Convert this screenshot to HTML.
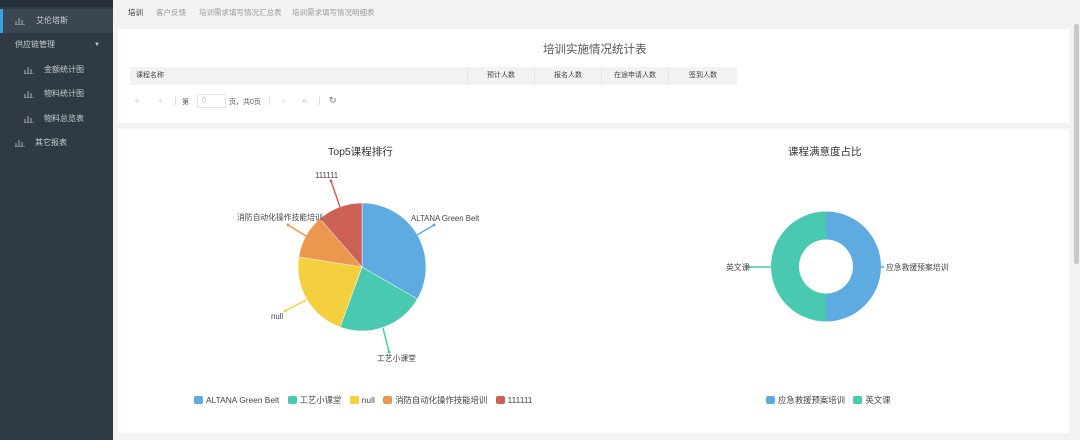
<!DOCTYPE html>
<html><head><meta charset="utf-8"><style>
*{margin:0;padding:0;box-sizing:border-box}
body{width:1080px;height:440px;overflow:hidden;background:#f3f3f3;font-family:"Liberation Sans","Noto Sans CJK SC",sans-serif;position:relative;color:#333}
.side{position:absolute;left:0;top:0;width:113px;height:440px;background:#2f3a45}
.side .top{height:7px;background:#27313b}
.item{position:absolute;left:0;width:113px;height:24px;font-size:8px;color:#c8cdd2;line-height:24px}
.item svg{position:absolute;top:8px}
.act{background:#3a4652;border-left:3px solid #3aa0e0}
.tabs{position:absolute;left:113px;top:0;right:0;height:22px;font-size:7.5px;color:#999}
.tabs span{position:absolute;top:7px}
.card{position:absolute;left:118px;width:951px;background:#fff}
.abs{position:absolute}
.th{position:absolute;top:67px;height:18px;background:#f2f2f2;font-size:7px;color:#444;line-height:18px;text-align:center;border-right:1px solid #e4e4e4}
.sb{position:absolute;left:1074px;top:24px;width:5px;height:240px;background:#c9c9c9;border-radius:2px}
.lg{position:absolute;font-size:8.4px;color:#444;white-space:nowrap}
.lg i{display:inline-block;width:9px;height:8px;border-radius:2px;vertical-align:-1px;margin-right:3px}
</style></head><body>
<div class="side"><div class="top"></div>
<div class="item act" style="top:9px"><svg style="left:12px" width="10" height="8"><path d="M1 8V4M4 8V1M7 8V3M0 8H10" stroke="#aab" fill="none"/></svg><span style="position:absolute;left:33px">艾伦塔斯</span></div>
<div class="item" style="top:33px"><span style="position:absolute;left:15px">供应链管理</span><span style="position:absolute;left:94px;font-size:6px">▼</span></div>
<div class="item" style="top:58px"><svg style="left:24px" width="10" height="8"><path d="M1 8V4M4 8V1M7 8V3M0 8H10" stroke="#aab" fill="none"/></svg><span style="position:absolute;left:44px">金额统计图</span></div>
<div class="item" style="top:82px"><svg style="left:24px" width="10" height="8"><path d="M1 8V4M4 8V1M7 8V3M0 8H10" stroke="#aab" fill="none"/></svg><span style="position:absolute;left:44px">物料统计图</span></div>
<div class="item" style="top:107px"><svg style="left:24px" width="10" height="8"><path d="M1 8V4M4 8V1M7 8V3M0 8H10" stroke="#aab" fill="none"/></svg><span style="position:absolute;left:44px">物料总览表</span></div>
<div class="item" style="top:131px"><svg style="left:15px" width="10" height="8"><path d="M1 8V4M4 8V1M7 8V3M0 8H10" stroke="#aab" fill="none"/></svg><span style="position:absolute;left:35px">其它报表</span></div>
</div>
<div class="tabs"><span style="left:15px;color:#333">培训</span><span style="left:43px">客户反馈</span><span style="left:86px">培训需求填写情况汇总表</span><span style="left:179px">培训需求填写情况明细表</span></div>
<div class="card" style="top:29px;height:94px"></div>
<div class="abs" style="left:543px;top:41px;font-size:11.5px;color:#555">培训实施情况统计表</div>
<div class="th" style="left:130px;width:338px;text-align:left;padding-left:6px">课程名称</div>
<div class="th" style="left:468px;width:67px">预计人数</div>
<div class="th" style="left:535px;width:67px">报名人数</div>
<div class="th" style="left:602px;width:67px">在途申请人数</div>
<div class="th" style="left:669px;width:68px;border-right:none">签到人数</div>
<div class="abs" style="left:135px;top:96px;font-size:8px;color:#bbb">«</div>
<div class="abs" style="left:159px;top:96px;font-size:8px;color:#bbb">‹</div>
<div class="abs" style="left:175px;top:97px;width:1px;height:8px;background:#ddd"></div>
<div class="abs" style="left:182px;top:97px;font-size:7px;color:#555">第</div>
<div class="abs" style="left:197px;top:94px;width:29px;height:14px;border:1px solid #e6e6e6;font-size:7px;color:#bbb;padding:2px 4px">0</div>
<div class="abs" style="left:229px;top:97px;font-size:7px;color:#555">页，共0页</div>
<div class="abs" style="left:269px;top:97px;width:1px;height:8px;background:#ddd"></div>
<div class="abs" style="left:282px;top:96px;font-size:8px;color:#bbb">›</div>
<div class="abs" style="left:302px;top:96px;font-size:8px;color:#bbb">»</div>
<div class="abs" style="left:319px;top:97px;width:1px;height:8px;background:#ddd"></div>
<div class="abs" style="left:329px;top:95px;font-size:9px;color:#777">↻</div>
<div class="card" style="top:129px;height:304px"></div>
<div class="abs" style="left:328px;top:144px;font-size:10.5px;color:#333">Top5课程排行</div>
<div class="abs" style="left:788px;top:144px;font-size:10.5px;color:#333">课程满意度占比</div>
<svg class="abs" style="left:0;top:0" width="1080" height="440" font-family="Liberation Sans,Noto Sans CJK SC,sans-serif" font-size="7.8" fill="#444">
<g stroke="#fff" stroke-width="0.5">
<path d="M362 267L362 203A64 64 0 0 1 417.4 299Z" fill="#5dabe1"/>
<path d="M362 267L417.4 299A64 64 0 0 1 340.1 327.1Z" fill="#48c9b0"/>
<path d="M362 267L340.1 327.1A64 64 0 0 1 298.8 257Z" fill="#f4d03f"/>
<path d="M362 267L298.8 257A64 64 0 0 1 320 218.7Z" fill="#eb984e"/>
<path d="M362 267L320 218.7A64 64 0 0 1 362 203Z" fill="#cd6155"/>
</g>
<g fill="none" stroke-width="1.5">
<path d="M417 235L434 225" stroke="#5dabe1"/><path d="M383 328L389 352" stroke="#48c9b0"/>
<path d="M306 300L285 311" stroke="#f4d03f"/><path d="M306 236L288 225" stroke="#eb984e"/>
<path d="M340 207L331 181" stroke="#cd6155"/>
</g>
<circle cx="434" cy="225" r="1.5" fill="#5dabe1"/><circle cx="389" cy="352" r="1.5" fill="#48c9b0"/>
<circle cx="285" cy="311" r="1.5" fill="#f4d03f"/><circle cx="288" cy="225" r="1.5" fill="#eb984e"/><circle cx="331" cy="181" r="1.5" fill="#cd6155"/>
<text x="411" y="221">ALTANA Green Belt</text>
<text x="377" y="361">工艺小课堂</text>
<text x="271" y="319">null</text>
<text x="237" y="220">消防自动化操作技能培训</text>
<text x="315" y="178">111111</text>
<path d="M826 211.5A55 55 0 0 1 826 321.5L826 293.5A27 27 0 0 0 826 239.5Z" fill="#5dabe1"/>
<path d="M826 211.5A55 55 0 0 0 826 321.5L826 293.5A27 27 0 0 1 826 239.5Z" fill="#48c9b0"/>
<path d="M771 267H749" stroke="#48c9b0" stroke-width="1.5"/><circle cx="749" cy="267" r="1.5" fill="#48c9b0"/>
<path d="M881 267H884" stroke="#5dabe1" stroke-width="1.5"/>
<text x="726" y="270">英文课</text>
<text x="886" y="270">应急救援预案培训</text>
</svg>
<div class="lg" style="left:194px;top:394px"><i style="background:#5dabe1"></i>ALTANA Green Belt <i style="background:#48c9b0;margin-left:6px"></i>工艺小课堂 <i style="background:#f4d03f;margin-left:6px"></i>null <i style="background:#eb984e;margin-left:6px"></i>消防自动化操作技能培训 <i style="background:#cd6155;margin-left:6px"></i>111111</div>
<div class="lg" style="left:766px;top:394px"><i style="background:#5dabe1"></i>应急救援预案培训 <i style="background:#48c9b0;margin-left:6px"></i>英文课</div>
<div class="sb"></div>
</body></html>
